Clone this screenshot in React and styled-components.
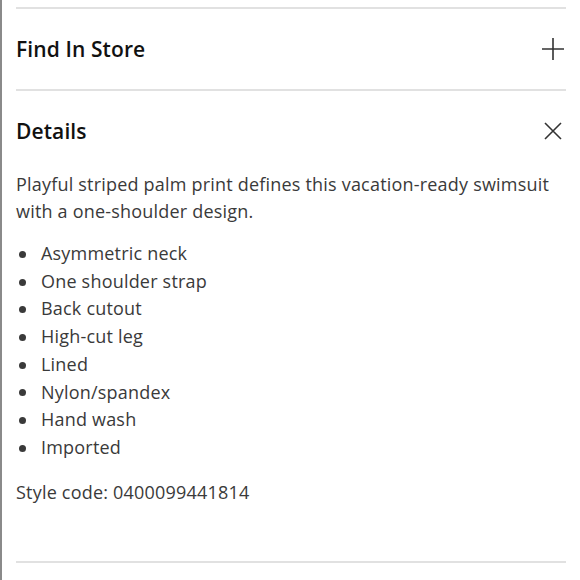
import React from "react";
import styled, { createGlobalStyle } from "styled-components";

const GlobalStyle = createGlobalStyle`
  body {
    margin: 0;
    background: #fff;
    font-family: "Open Sans", Lato, sans-serif;
  }
`;

const Page = styled.div`
  width: 580px;
  height: 580px;
  box-sizing: border-box;
  border-left: 2px solid #8a8a8a;
  padding: 7px 14px 0 14px;
  overflow: hidden;
`;

const Section = styled.section`
  border-top: 2px solid #e1e1e1;
`;

const Header = styled.div`
  height: 80px;
  display: flex;
  align-items: center;
  justify-content: space-between;
`;

const Title = styled.h2`
  margin: 0;
  font-size: 21px;
  font-weight: 600;
  color: #111;
  letter-spacing: 0.1px;
`;

const IconBox = styled.span`
  width: 24px;
  height: 24px;
  margin-right: 1px;
  display: flex;
  align-items: center;
  justify-content: center;
  color: #333;
`;

const Body = styled.div`
  padding-bottom: 55px;
  color: #3a3a3a;
  font-size: 18px;
  line-height: 27px;
  letter-spacing: 0.2px;
`;

const Text = styled.p`
  margin: 0;
`;

const List = styled.ul`
  margin: 15px 0 17px;
  padding: 0;
  list-style: none;
  line-height: 27.7px;
`;

const Item = styled.li`
  position: relative;
  padding-left: 25px;
  &::before {
    content: "";
    position: absolute;
    left: 3px;
    top: 50%;
    width: 7px;
    height: 7px;
    margin-top: -3px;
    border-radius: 50%;
    background: #3a3a3a;
  }
`;

const PlusIcon = () => (
  <svg width="24" height="24" viewBox="0 0 24 24" fill="none" stroke="currentColor" strokeWidth="1.6">
    <path d="M1 12h22M12 1v22" />
  </svg>
);

const CloseIcon = () => (
  <svg width="24" height="24" viewBox="0 0 24 24" fill="none" stroke="currentColor" strokeWidth="1.6">
    <path d="M4 4l16 16M20 4L4 20" />
  </svg>
);

const features = [
  "Asymmetric neck",
  "One shoulder strap",
  "Back cutout",
  "High-cut leg",
  "Lined",
  "Nylon/spandex",
  "Hand wash",
  "Imported",
];

export default function App() {
  return (
    <>
      <GlobalStyle />
      <Page>
        <Section>
          <Header>
            <Title>Find In Store</Title>
            <IconBox><PlusIcon /></IconBox>
          </Header>
        </Section>
        <Section>
          <Header>
            <Title>Details</Title>
            <IconBox><CloseIcon /></IconBox>
          </Header>
          <Body>
            <Text>
              Playful striped palm print defines this vacation-ready swimsuit
              with a one-shoulder design.
            </Text>
            <List>
              {features.map((f) => (
                <Item key={f}>{f}</Item>
              ))}
            </List>
            <Text>Style code: 0400099441814</Text>
          </Body>
        </Section>
        <Section />
      </Page>
    </>
  );
}
